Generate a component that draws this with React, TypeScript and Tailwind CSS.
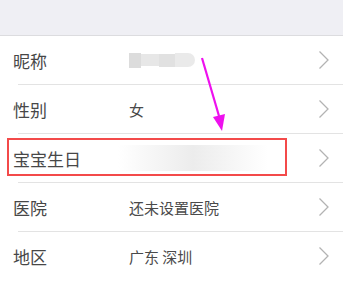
import React from "react";

type Row = { label: string; value?: React.ReactNode; highlight?: boolean; last?: boolean };

function Chevron() {
  return (
    <svg width="12" height="20" viewBox="0 0 12 20" className="shrink-0">
      <path d="M1.5 1.5 L10 10 L1.5 18.5" fill="none" stroke="#b3b3b3" strokeWidth="1.3" />
    </svg>
  );
}

export default function App() {
  const rows: Row[] = [
    {
      label: "昵称",
      value: (
        <div className="flex items-center gap-0 opacity-80">
          <div className="h-[15px] w-[12px] bg-[#d4d4d4]" />
          <div className="h-[12px] w-[18px] bg-[#e2e2e2]" />
          <div className="h-[13px] w-[16px] bg-[#dadada]" />
          <div className="h-[14px] w-[20px] rounded-r-full bg-[#e6e6e6]" />
        </div>
      ),
    },
    { label: "性别", value: "女" },
    {
      label: "宝宝生日",
      highlight: true,
      value: <div className="-ml-[11px] h-[26px] w-[150px] bg-gradient-to-r from-white via-[#ececec] to-white" />,
    },
    { label: "医院", value: "还未设置医院" },
    { label: "地区", value: "广东 深圳", last: true },
  ];

  return (
    <div
      className="relative h-[282px] w-[343px] overflow-hidden bg-white"
      style={{ fontFamily: '"Noto Sans CJK SC", "Noto Sans", sans-serif' }}
    >
      <div className="h-[36px] border-b border-[#dcdcdf] bg-[#efeff4]" />
      {rows.map((r, i) => (
        <div key={i} className="relative h-[49px] pl-[18px]">
          <div className={`flex h-[48px] items-center pr-[13px] ${r.last ? "" : ""}`}>
            <div className="-ml-[5px] w-[116px] text-[17px] leading-none text-[#474747]">{r.label}</div>
            <div className="flex-1 text-[15px] leading-none text-[#4a4a4a]">{r.value}</div>
            <Chevron />
          </div>
          {!r.last && <div className="h-px bg-[#e3e3e3]" />}
          {r.highlight && (
            <div className="absolute left-[7px] top-[4px] h-[38px] w-[280px] border-2 border-[#f34a4a]" />
          )}
        </div>
      ))}
      <svg className="absolute left-0 top-0" width="343" height="282">
        <line x1="202" y1="58" x2="219" y2="116" stroke="#ee10ee" strokeWidth="2.2" />
        <polygon points="213,117 225,114 222,131" fill="#ee10ee" />
      </svg>
    </div>
  );
}
